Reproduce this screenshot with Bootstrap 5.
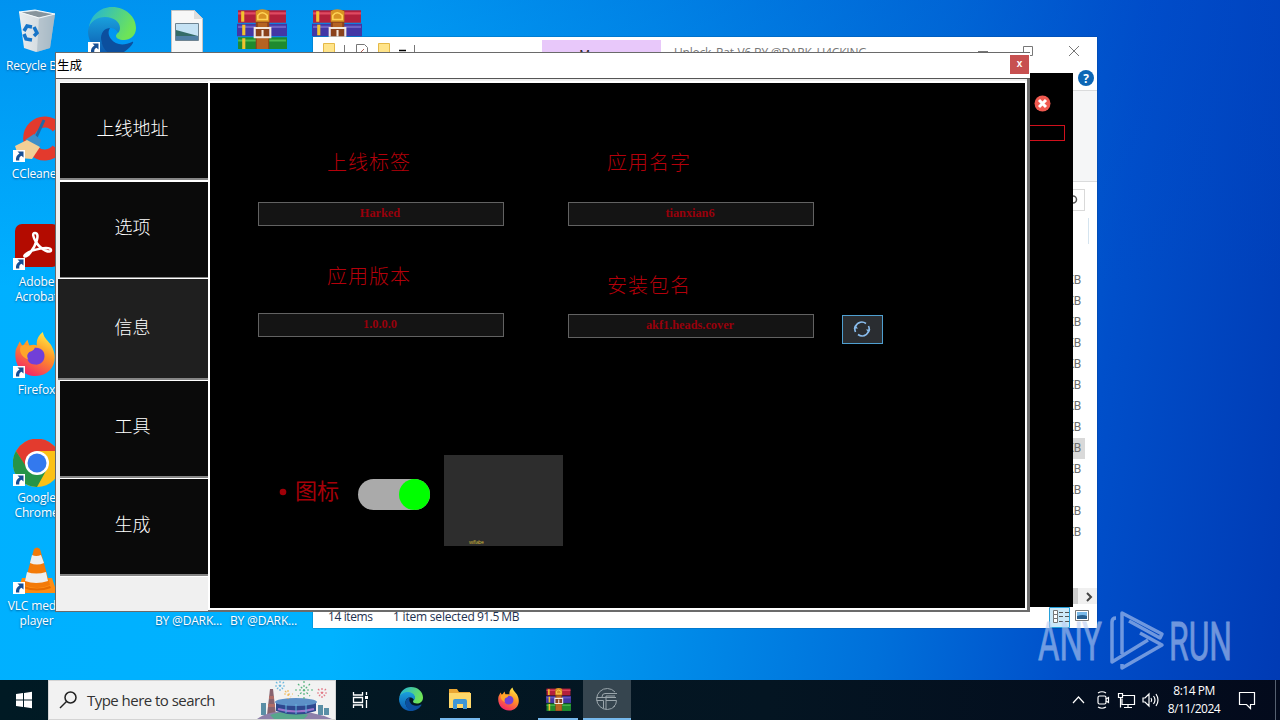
<!DOCTYPE html>
<html lang="zh-CN">

<head>
  <meta charset="UTF-8">
  <meta name="viewport" content="width=device-width, initial-scale=1.0">
  <title>生成</title>
  <link href="https://cdn.jsdelivr.net/npm/bootstrap@5.3.2/dist/css/bootstrap.min.css" rel="stylesheet">
  <script src="https://cdn.jsdelivr.net/npm/bootstrap@5.3.2/dist/js/bootstrap.bundle.min.js"></script>
  <style>
    body {
      width: 1280px;
      height: 720px;
      font-family: "Open Sans", "Noto Sans CJK SC", sans-serif;
      font-size: 12px;
      line-height: 15px;
      background: linear-gradient(180deg, rgba(0, 70, 200, .28), rgba(0, 60, 190, 0) 40%),
        linear-gradient(97deg, #00b0ff 0%, #00b2ff 30%, #0098f0 48%, #0070da 70%, #004fca 84%, #003ab4 100%);
    }

    svg { display: block; flex-shrink: 0; }
    .cjk { font-family: "Noto Sans CJK SC", sans-serif; font-weight: 300; }

    /* desktop */
    .desk { left: -1px; top: 0; display: grid; grid-auto-flow: column; grid-template-columns: repeat(5, 75px); grid-template-rows: repeat(6, 108px); }
    .desk-item { padding-top: 7px; color: #fff; text-align: center; letter-spacing: -.15px; text-shadow: 0 1px 2px rgba(0, 40, 90, .6); white-space: nowrap; }
    .desk-item svg { margin: 0 auto 3px; }

    /* explorer */
    .explorer { left: 313px; top: 37px; width: 784px; height: 591px; color: #444; box-shadow: 0 0 1px #035; }
    .ex-title { height: 36px; }
    .ex-tab { width: 119px; height: 30px; margin-top: 3px; background: #e8c8fa; color: #222; padding-top: 7px; }
    .ex-side { width: 24px; }
    .ribbon { height: 92px; background: #f5f6f7; border-top: 1px solid #dadbdc; border-bottom: 1px solid #dadbdc; }
    .addr { width: 12px; height: 22px; margin-top: 7px; border: 1px solid #d9d9d9; border-left: 0; }
    .kb { width: 12px; height: 21px; font: 12px/21px Roboto, sans-serif; color: #6d6d6d; direction: rtl; overflow: hidden; padding-right: 4px; letter-spacing: -.3px; }
    .kb.sel { background: #d9d9d9; }
    .ex-status { height: 21px; color: #1e3250; }
    .black-app { width: 760px; height: 534px; background: #000; }
    .red-box { width: 90px; height: 16px; border: 1px solid #d0101c; margin-left: 662px; }

    /* dialog */
    .dlg { left: 55px; top: 52px; width: 975px; height: 560px; background: #f0f0f0; border: 1px solid #6a6a6a; border-right: 0; box-shadow: inset -3px 0 #6b6b6b; }
    .dlg-title { height: 26px; background: #fff; border-bottom: 1px solid #555; color: #000; padding-left: 1px; font-size: 12.5px; }
    .dlg-x { width: 19px; height: 19px; margin: 2px 1px 0 0; background: #c75050; color: #fff; font: bold 10px/17px "Liberation Sans", sans-serif; text-align: center; }
    .side { width: 154px; padding: 4px 2px 0 4px; }
    .side-btn { height: 97px; margin-bottom: 2px; width: 148px; background: #0a0a0a; color: #fff; font-size: 18px; font-weight: 300; border: 0; border-bottom: 2px solid #858585; border-radius: 0; padding: 0 3px 7px 0; box-shadow: 1px 0 #fff, 0 1px #fff, 0 -1px #fff; }
    .side-btn.on { width: 152px; height: 101px; margin: -2px 0 1px -2px; background: #1f1f1f; box-shadow: 0 -1px #fff; padding: 0 3px 4px 0; }
    .side-btn.on ~ .side-btn { margin-bottom: 1px; }
    .pane { width: 819px; height: 529px; margin-top: 2px; border: 2px solid #fff; box-shadow: 0 2px #6b6b6b; background: #000; color: #a50008; }
    .field-lbl { height: 24px; line-height: 24px; font-size: 20px; letter-spacing: 1px; width: 84px; margin-left: 69px; color: #b4000a; white-space: nowrap; position: relative; top: -1px; }
    .field { width: 246px; height: 24px; padding: 0 2px 2px 0; border: 1px solid #626262; border-radius: 0; background: #141414; color: #98000b; text-align: center; font: bold 12.3px/20px "Liberation Serif", serif; }
    .field:focus { background: #141414; color: #98000b; box-shadow: none; }
    .refresh { width: 41px; height: 29px; border: 1px solid #4f9fd0; background: #2a2d31; border-radius: 0; }
    .toggle { width: 72px; height: 31px; border-radius: 16px; background: #aaa; }
    .toggle span { width: 31px; height: 31px; border-radius: 50%; background: #0f0; }
    .thumb { width: 119px; height: 91px; background: #2d2d2d; color: #d0b93c; font-size: 5px; line-height: 7px; letter-spacing: -.3px; padding-left: 25px; }

    /* taskbar */
    .bar { height: 40px; bottom: 0; background: linear-gradient(90deg, #001a24, #041522 60%, #030a1c); color: #fff; }
    .search { width: 288px; background: #f2f2f2; border: 1px solid #d4d4d4; color: #333; font-size: 15px; letter-spacing: -.53px; }
    .app { width: 48px; margin-right: 1px; border-bottom: 2px solid transparent; }
    .run { background: linear-gradient(#76b9ed, #76b9ed) center bottom / 40px 2px no-repeat border-box; }
    .app.active { background: #36454f; border-color: #76b9ed; }
    .mark-any { left: 1036px; top: 606px; }
  </style>
</head>

<body class="position-relative overflow-hidden m-0">
  <!-- shared icons -->
  <svg width="0" height="0" class="position-absolute">
    <defs>
      <linearGradient id="ff" x1=".8" y1="0" x2=".3" y2="1"><stop offset="0" stop-color="#fff04a"/><stop offset=".45" stop-color="#ff9425"/><stop offset="1" stop-color="#f2206c"/></linearGradient>
      <linearGradient id="eg" x1="0" y1="0" x2="1" y2=".4"><stop offset="0" stop-color="#1eb1df"/><stop offset="1" stop-color="#6ee457"/></linearGradient>
      <linearGradient id="eb" x1="0" y1="0" x2="0" y2="1"><stop offset="0" stop-color="#1aa0dc"/><stop offset="1" stop-color="#0b56ad"/></linearGradient>
      <linearGradient id="bin" x1="0" y1="0" x2="1" y2="0"><stop offset="0" stop-color="#e9edef"/><stop offset=".6" stop-color="#d3dbe0"/><stop offset="1" stop-color="#9eb5c4"/></linearGradient>
      <symbol id="link" viewBox="0 0 12 12"><path fill="#fff" d="M0 0h12v12H0z"/><path fill="#174f94" d="M4.500 1.500h6v6L8.500 5.700C6.500 6.800 6 8 6.300 10.500H3C2.500 7.500 4 5 6.500 3.600z"/></symbol>
      <symbol id="edge" viewBox="0 0 48 48">
        <path fill="url(#eg)" d="M1 21C2 9 12 0 24 0c14 0 24 10 24 21 0 8-6 12-12 12-5 0-8-2-8-4s3-3 3-8c0-6-6-9-13-9C10 12 4 15 1 21z"/>
        <path fill="url(#eb)" d="M0 24C1 14 10 10 17 10c9 0 15 5 15 11 0 2-1 4-2 5-2-4-5-5-8-5-6 0-9 5-9 10 0 8 6 14 13 16-1 1-2 1-3 1C10 48 0 37 0 24z"/>
        <path fill="#0c4f9e" d="M13 31c0-6 4-10 9-10-2 3-2 7 1 11 4 6 13 7 21 3 1-.5 1.500.5 1 1-4 7-12 12-21 12-7-3-11-10-11-17z"/>
      </symbol>
      <symbol id="rar" viewBox="0 0 48 40">
        <path fill="#b3203c" d="M1 1h46v12H1z"/><path fill="#df4a62" d="M1 3h46v2H1z"/>
        <path fill="#4337a5" d="M0 14h48v12H0z"/><path fill="#6d61c4" d="M1 16h46v2H1z"/>
        <path fill="#1f8a2f" d="M1 27h47v13H1z"/><path fill="#4bba50" d="M1 29h46v2H1z"/>
        <path fill="#f2c32f" d="M4 2h3v10H4zM5 15h3v10H5zM5 28h3v11H5z"/>
        <path fill="#8b421c" d="M18 1h13v39H18z"/><path fill="#d99322" d="M18 2q6-4 13 0v10H18z"/><path fill="#b56322" d="M20 13h9v5h-9zM19 28h11v11H19z"/>
        <path fill="none" stroke="#ffd455" stroke-width="1.500" d="M20 10V6q4-5 9 0v4z"/>
        <path fill="none" stroke="#f3e9df" stroke-width="2" d="M17 18h15v9H17zM24.500 20v6"/>
      </symbol>
      <symbol id="fox" viewBox="0 0 48 48">
        <path fill="url(#ff)" d="M3 19l4-8 3 5 5-7 2 6c3-1 6-1 8 0-1-5 1-10 6-14 2 8 6 9 9 14 9 16 0 32-16 32C9 47 0 34 3 19z"/>
        <path fill="#713fd8" d="M15 23c2-6 13-8 17-1 3 7-2 14-9 13-6 0-10-5-8-12z"/><path fill="#ffa52a" d="M8 16c4-3 10 0 14 0 2 2-1 5-5 6-2 2-3 4-1 8-7-3-10-8-8-14z"/>
      </symbol>
    </defs>
  </svg>

  <div class="desk position-absolute">
    <div class="desk-item">
      <svg width="48" height="48" viewBox="0 0 48 48"><path fill="url(#bin)" d="M6 5l16-2 20 4-5 34-14 4-12-4z"/><path fill="#87949c" d="M8 5.500L23 4l17 3.500-14 3z"/><path fill="#a8b9c4" d="M26 10l16-3-5 34-13 4z" opacity=".7"/><path fill="none" stroke="#f5f9fb" d="M6 5l16-2 20 4-16 4z"/><g fill="none" stroke="#1674c8" stroke-width="3.500"><path d="M11 24l3-5 5 1M21 20l3 6-3 3M19 33l-6-1-2-5"/></g></svg>
      Recycle Bin
    </div>
    <div class="desk-item">
      <svg width="48" height="48" viewBox="0 0 48 48"><path fill="none" stroke="#e33a2d" stroke-width="11" d="M44 13A16 16.500 0 1 0 44 34"/><path stroke="#2169a5" stroke-width="3" d="M31 5L21 27"/><path fill="#3d8fc9" d="M12 25l9-6 7 6-2 7z"/><path fill="#f2cf96" d="M2 31l12-6 13 7-8 12-13-1z"/><use href="#link" x="0" y="35" width="12" height="12"/></svg>
      CCleaner
    </div>
    <div class="desk-item">
      <svg width="48" height="48" viewBox="0 0 48 48"><rect x="2" y="1" width="44" height="43" rx="7" fill="#b30b00"/><path fill="none" stroke="#fff" stroke-width="2.500" d="M22 10c5 0 2 11-5 20-4 5-8 4-4 1 6-5 24-8 25-4 0 4-10 0-15-8-3-5-4-9-1-9z"/><use href="#link" x="0" y="35" width="12" height="12"/></svg>
      Adobe<br>Acrobat
    </div>
    <div class="desk-item">
      <svg width="48" height="48" viewBox="0 0 48 48"><use href="#fox" x="0" width="46" height="46"/><use href="#link" x="0" y="35" width="12" height="12"/></svg>
      Firefox
    </div>
    <div class="desk-item">
      <svg width="48" height="48" viewBox="0 0 48 48"><circle cx="24" cy="24" r="24" fill="#fbc116"/><path fill="#e33b2e" d="M3 12a24 24 0 0 1 42 0H24L14 30z"/><path fill="#269447" d="M3 12a24 24 0 0 0 21 36l10-18-20-1z"/><circle cx="24" cy="24" r="12" fill="#fff"/><circle cx="24" cy="24" r="9.500" fill="#3379ee"/><use href="#link" x="0" y="35" width="12" height="12"/></svg>
      Google<br>Chrome
    </div>
    <div class="desk-item">
      <svg width="48" height="48" viewBox="0 0 48 48"><path fill="#ff8c12" d="M9 31h30l5 15H4z"/><path fill="#e66b00" d="M11 39q13 5 26 0l1 2q-14 5-28 0z"/><path fill="#f37a08" d="M21 2q3-3 6 0l10 36q-13 6-26 0z"/><path fill="#eee" d="M19 8q4 2 9 0l3 8q-7 3-14 0zM14 25q9 3 19 0l2 9q-12 4-23 0z"/><use href="#link" x="0" y="35" width="12" height="12"/></svg>
      VLC media<br>player
    </div>
    <div class="desk-item" style="grid-column: 2; grid-row: 1">
      <svg width="48" height="48" viewBox="0 0 48 48"><use href="#edge" width="48" height="48"/><use href="#link" x="0" y="35" width="12" height="12"/></svg>
    </div>
    <div class="desk-item" style="grid-column: 3; grid-row: 1">
      <svg width="48" height="48" viewBox="0 0 48 48"><path fill="#f7f7f7" stroke="#c5c5c5" d="M8.500 3.500h23l8 8v36h-31z"/><path fill="#ddd" d="M31 3v9h9z"/><path fill="#c5e2f4" stroke="#6f8492" d="M12.500 16.500h23v17h-23z"/><path fill="#356c68" d="M13 23q11 3 22 6v4H13z"/><path fill="#507fa4" d="M13 29h22v4H13z"/></svg>
    </div>
    <div class="desk-item" style="grid-column: 4; grid-row: 1"><svg width="50" height="42"><use href="#rar" width="50" height="42" y="2"/></svg></div>
    <div class="desk-item" style="grid-column: 5; grid-row: 1"><svg width="50" height="42"><use href="#rar" width="50" height="42" y="2"/></svg></div>
    <div class="desk-item d-flex align-items-end justify-content-center pb-1 ps-1" style="grid-column: 3; grid-row: 6"><div class="mb-3">BY @DARK...</div></div>
    <div class="desk-item d-flex align-items-end justify-content-center pb-1 ps-1" style="grid-column: 4; grid-row: 6"><div class="mb-3">BY @DARK...</div></div>
  </div>

  <!-- explorer window -->
  <div class="explorer position-absolute bg-white d-flex flex-column">
    <div class="ex-title d-flex">
      <svg width="229" height="36" viewBox="0 0 229 36"><path fill="#ffe48a" stroke="#e5b947" d="M10.500 6.500h11v11h-11zM65.500 6.500h11v11h-11z"/><path stroke="#777" d="M31.500 8v9M101.500 8v9"/><path fill="#fff" stroke="#777" d="M43.500 7.500h8l3 3v7h-11z"/><path fill="none" stroke="#b65b52" d="M48 15l3-3"/><path stroke="#000" stroke-width="1.500" d="M86 13.500h7"/></svg>
      <div class="ex-tab text-center">Manage</div>
      <div class="text-nowrap" style="padding: 8px 0 0 13px; width: 300px; letter-spacing: -.22px; color: #777">Unlock_Rat-V6 BY @DARK_H4CKING</div>
      <svg width="136" height="36" viewBox="0 0 136 36" fill="none" stroke="#777"><path d="M17 14.500h10M62.500 9.500h9v9h-9z"/><path d="M108 9l10 10m0-10l-10 10"/></svg>
    </div>
    <div class="d-flex">
      <div class="black-app d-flex flex-column">
        <svg class="ms-auto" style="margin: 22px 22px 13px" width="17" height="17" viewBox="0 0 17 17"><circle cx="8.500" cy="8.500" r="8" fill="#f05a50"/><path stroke="#fff" stroke-width="3" d="M5 5l7 7m0-7l-7 7"/></svg>
        <div class="red-box"></div>
      </div>
      <div class="ex-side d-flex flex-column" style="height: 534px">
        <svg class="overflow-visible" width="24" height="17" viewBox="0 0 24 17"><circle cx="13" cy="5" r="8" fill="#0c66b5"/><text x="13" y="9.500" text-anchor="middle" font-size="12" font-weight="bold" fill="#fff">?</text></svg>
        <div class="ribbon"></div>
        <div class="addr"><svg width="6" height="20"><path fill="none" stroke="#555" stroke-width="1.500" d="M0 6a3.500 3.500 0 1 1 0 7"/></svg></div>
        <svg width="24" height="59"><path stroke="#d5e4ef" d="M15.500 7v26"/></svg>
        <div class="kb">KB</div>
        <div class="kb">KB</div>
        <div class="kb">KB</div>
        <div class="kb">KB</div>
        <div class="kb">KB</div>
        <div class="kb">KB</div>
        <div class="kb">KB</div>
        <div class="kb">KB</div>
        <div class="kb sel">KB</div>
        <div class="kb">KB</div>
        <div class="kb">KB</div>
        <div class="kb">KB</div>
        <div class="kb">KB</div>
        <svg class="mt-auto mb-0" width="24" height="19" viewBox="0 0 24 19"><path fill="#f0f0f0" d="M0 0h24v16H0z"/><path fill="#cdcdcd" d="M0 0h5v16H0z"/><path fill="none" stroke="#444" stroke-width="2" d="M14 5l4 4-4 4"/></svg>
      </div>
    </div>
    <div class="ex-status d-flex text-nowrap" style="padding: 2px 0 0 15px">
      <span style="width: 65px; letter-spacing: -.4px">14 items</span>
      <span style="width: 84px; letter-spacing: -.2px">1 item selected</span>
      <span style="letter-spacing: -.5px">91.5 MB</span>
      <svg class="ms-auto" style="margin: -2px 7px 0 0" width="41" height="21" viewBox="0 0 41 21"><path fill="#cce8f8" stroke="#26a0da" d="M.500.500h20v20H.500z"/><path fill="#fff" stroke="#777" d="M4.500 3.500h4v4h-4zM4.500 7.500h4v4h-4zM4.500 11.500h4v4h-4z"/><path stroke="#555" stroke-dasharray="4 2" d="M10 5.500h10M10 9.500h10M10 14.500h10"/><path fill="#fff" stroke="#777" d="M26.500 3.500h13v10h-13z"/><path fill="#78b8e8" d="M28 5h10v7H28z"/><path fill="#285e8d" d="M28 9q6-2 10 0v3H28z"/></svg>
    </div>
  </div>

  <!-- builder dialog -->
  <div class="dlg position-absolute">
    <div class="dlg-title d-flex justify-content-between">
      <span class="cjk" style="font-weight: 400; padding-top: 4px">生成</span>
      <div class="dlg-x">x</div>
    </div>
    <div class="d-flex">
      <div class="side d-flex flex-column cjk">
        <button class="side-btn">上线地址</button>
        <button class="side-btn">选项</button>
        <button class="side-btn on">信息</button>
        <button class="side-btn">工具</button>
        <button class="side-btn">生成</button>
      </div>
      <div class="pane" style="margin-left: -2px">
        <div class="d-flex" style="padding: 68px 0 0 48px">
          <div style="width: 310px; padding-bottom: 7px">
            <div class="field-lbl cjk" style="margin-bottom: 27px">上线标签</div>
            <input class="form-control field" value="Harked">
            <div class="field-lbl cjk" style="margin-top: 39px; margin-bottom: 24px">应用版本</div>
            <input class="form-control field" value="1.0.0.0">
          </div>
          <div style="width: 274px; padding-bottom: 6px">
            <div class="field-lbl cjk" style="margin-left: 39px; margin-bottom: 27px">应用名字</div>
            <input class="form-control field" value="tianxian6">
            <div class="field-lbl cjk" style="margin-left: 39px; margin-top: 48px; margin-bottom: 16px">安装包名</div>
            <input class="form-control field" value="akf1.heads.cover">
          </div>
          <button class="refresh p-0 pb-1 pe-1 d-flex align-items-center justify-content-center align-self-end">
            <svg style="margin: 3px 0 0 2px" width="18" height="18" viewBox="0 0 18 18" fill="none" stroke="#8abdee" stroke-width="1.600"><path d="M2.500 12A7 7 0 0 1 13 3.500M15.500 6A7 7 0 0 1 5 14.500M2.500 6.500Q4 3 7.500 2.300M15.500 11.500Q14 15 10.500 15.700"/><path fill="#8abdee" stroke="none" d="M.500 8.500h4.500L2.500 5.500zM13 9.500h4.500L15.500 12.500z"/></svg>
          </button>
        </div>
        <div class="d-flex" style="padding: 111px 0 0 69px">
          <svg width="16" height="91"><circle cx="4" cy="37" r="3.300" fill="#a00008"/></svg>
          <div class="cjk" style="width: 63px; padding-top: 22px; font-size: 22px; line-height: 24px; font-weight: 400">图标</div>
          <div class="toggle d-flex justify-content-end" style="margin: 24px 14px 0 0"><span></span></div>
          <div class="thumb d-flex align-items-end">wifiabe</div>
        </div>
      </div>
    </div>
  </div>

  <!-- taskbar -->
  <div class="bar position-absolute start-0 w-100 d-flex">
    <svg width="48" height="40" viewBox="0 0 48 40" fill="#fff"><path d="M16 14l7-1v6.500h-7zM24 12.900l8-1.100v7.700h-8zM16 20.500h7V27l-7-1zM24 20.500h8v7.700l-8-1.100z"/></svg>
    <div class="search d-flex align-items-center">
      <svg width="38" height="38" viewBox="0 0 38 38" fill="none" stroke="#222" stroke-width="1.500"><circle cx="21.500" cy="16.500" r="5.500"/><path d="M17.500 20.500L11 27"/></svg>
      <span class="text-nowrap" style="width: 169px">Type here to search</span>
      <svg width="78" height="38" viewBox="0 0 78 38">
        <path fill="#5a8fa6" d="M5 22h5v12H5zM62 24h5v10h-5zM68 27h5v7h-5z"/><path fill="#88636f" d="M14 8h3l3 26h-9z"/><path fill="#b06d68" d="M13 15h5v3h-5zM12 23h7v3h-7z"/>
        <path fill="#8d80aa" d="M1 38q10-8 33-8t42 8z"/><path fill="#57a78c" d="M14 34q20-7 38 0l-4 4H18z"/>
        <path fill="#2e478f" d="M20 21h40v9q-20 7-40 0z"/><ellipse cx="40" cy="21" rx="21" ry="4" fill="#5d91c8"/><path stroke="#9a74cc" stroke-width="2" d="M22 28q18 5 36 0" fill="none"/><path stroke="#63b5dd" d="M30 23v9M40 23v10M50 23v9"/>
        <g fill="none" stroke-width="1.200" stroke-dasharray="2 2"><path stroke="#55b37d" d="M48 0v18M39 9h18M42 3l12 12M54 3L42 15"/><path stroke="#69b6dc" d="M24 0v10M19 5h10M20 1l8 8M28 1l-8 8"/><path stroke="#e17684" d="M66 7v11M61 12h10M62 8l8 8M70 8l-8 8"/><path stroke="#eebc60" d="M32 9v9M28 13h9M29 10l6 6"/></g>
      </svg>
    </div>
    <svg width="51" height="40" viewBox="0 0 51 40" fill="none" stroke="#fff" stroke-width="1.300"><path d="M17.500 12v3h9v-3M17.500 28v-3h9v3M17.500 17.500h9v5h-9zM30.500 12v3M30.500 20v8"/><path fill="#fff" stroke="none" d="M29 16h3v3h-3z"/></svg>
    <div class="app d-flex align-items-center justify-content-center"><svg width="24" height="24"><use href="#edge" width="24" height="24"/></svg></div>
    <div class="app run d-flex align-items-center justify-content-center">
      <svg width="24" height="22" viewBox="0 0 24 22"><path fill="#eba632" d="M1 1h8l2 3h11v5H1z"/><path fill="#ffd86a" d="M1 5h22v15H1z"/><path fill="#3e97d5" d="M5 13q0-2 2-2h10q2 0 2 2v8h-4v-5H9v5H5z"/></svg>
    </div>
    <div class="app d-flex align-items-center justify-content-center"><svg width="24" height="24"><use href="#fox" width="24" height="24"/></svg></div>
    <div class="app run d-flex align-items-center justify-content-center"><svg width="25" height="23" viewBox="0 0 48 40" preserveAspectRatio="none"><use href="#rar" width="48" height="40"/></svg></div>
    <div class="app active d-flex align-items-center justify-content-center">
      <svg width="24" height="24" viewBox="0 0 24 24" fill="none" stroke="#9aa5ab" stroke-width="1"><path d="M20 5A10.500 10.500 0 1 0 20 19M22 6.500H10q-3 0-3 3.500M20 9H11v13.500M1.500 10.500H21M1.500 13.500h7v8M11 13.500h10.500q0 4-3 6.500"/></svg>
    </div>
    <div class="ms-auto d-flex">
      <svg width="97" height="40" viewBox="0 0 97 40" fill="none" stroke="#fff" stroke-width="1.200"><path d="M6 23l5.500-6 5.500 6"/><rect x="31" y="16" width="8" height="8" rx="1.500"/><path d="M39 19l2.500-1.500v5L39 21M31 13q4-2.500 8 0M31 27q4 2.500 8 0"/><path d="M56 15.500h11.500v9H55v-6M61 24.500v3M57 27.500h8M51.500 13.500h4v4h-4zM53.500 18v9.500"/><path d="M76 18h2l4-4v12l-4-4h-2zM84 18q1.500 2 0 4M86.500 16q3 4 0 8M89 14q4 6 0 12"/></svg>
      <div class="text-center text-nowrap" style="width: 60px; padding-top: 2px; line-height: 18px; letter-spacing: -.5px">8:14 PM<br>8/11/2024</div>
      <svg width="56" height="40" viewBox="0 0 56 40" fill="none" stroke="#fff" stroke-width="1.200"><path d="M15.500 12.500h15v12h-4v4l-4-4h-7z"/><path stroke="#566070" stroke-width="1" d="M51.500 0v40"/></svg>
    </div>
  </div>

  <!-- watermark -->
  <svg class="mark-any position-absolute" width="200" height="70" viewBox="0 0 200 70" opacity=".6" fill="#b9cdf2">
    <g font-family="Roboto" font-size="53.500" font-weight="400" stroke="#b9cdf2" stroke-width=".8">
      <text x="2" y="54" textLength="64" lengthAdjust="spacingAndGlyphs">ANY</text>
      <text x="133" y="54" textLength="63" lengthAdjust="spacingAndGlyphs">RUN</text>
    </g>
    <path fill="none" stroke="#b9cdf2" stroke-width="3.500" stroke-linejoin="round" d="M80 12q-4 0-4 4v40l36-22M86 48V7l40 21-2 4-31-17M86 58v4l40-23-22-12"/>
  </svg>
</body>

</html>
